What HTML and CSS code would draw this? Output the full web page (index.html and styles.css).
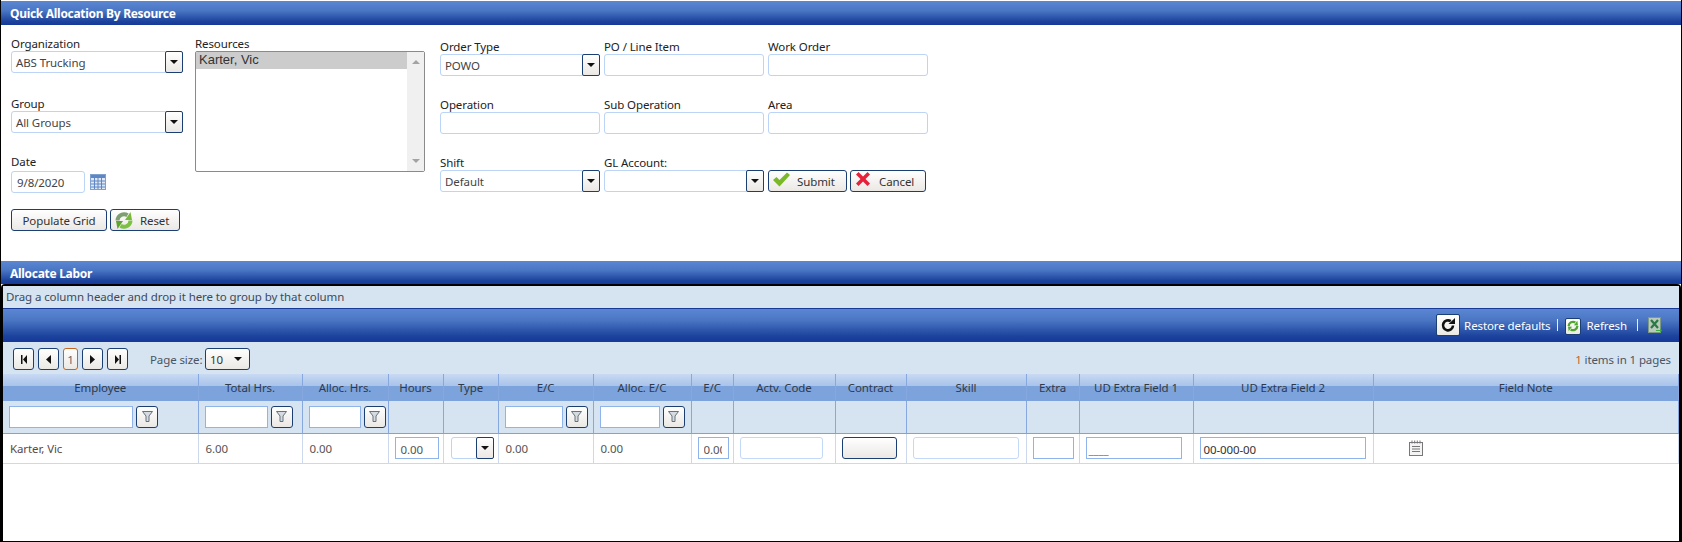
FILE: index.html
```html
<!DOCTYPE html>
<html lang="en">

<head>
	<meta charset="utf-8">
	<title>Quick Allocation By Resource</title>
	<link rel="stylesheet" href="styles.css">
</head>

<body>
	<div id="content">
		<div class="titlebar">Quick Allocation By Resource</div>

		<div id="quickform">
			<div class="col-org">
				<div class="field f-org">
					<label>Organization</label>
					<div class="combo"><span>ABS Trucking</span><i class="combo-btn"><b></b></i></div>
				</div>
				<div class="field f-group">
					<label>Group</label>
					<div class="combo"><span>All Groups</span><i class="combo-btn"><b></b></i></div>
				</div>
				<div class="field f-date">
					<label>Date</label>
					<div class="date-row">
						<div class="input date-input">9/8/2020</div>
						<svg class="cal" width="16" height="16" viewBox="0 0 16 16">
							<rect x="0.5" y="0.5" width="15" height="15" fill="#dfe8f6" stroke="#7f9fcf"/>
							<rect x="1" y="1" width="14" height="3" fill="#5f86c4"/>
							<path d="M1 7h14M1 10h14M1 13h14M4.500 4v11M8 4v11M11.500 4v11" stroke="#5f86c4" fill="none"/>
						</svg>
					</div>
				</div>
				<div class="btn-row">
					<button class="btn b-populate">Populate Grid</button>
					<button class="btn b-reset">
						<svg class="ico" width="18" height="19" viewBox="0 0 18 18">
							<path d="M2.500 9A6.500 6.500 0 0 1 12.500 3.800" fill="none" stroke="#7f9f72" stroke-width="4"/>
							<path d="M10 8.500L17 8.500 15.500 0.500z" fill="#78b83a"/>
							<path d="M15.500 9A6.500 6.500 0 0 1 5.500 14.200" fill="none" stroke="#7cc142" stroke-width="4"/>
							<path d="M8 9.500L1 9.500 2.500 17.500z" fill="#5ea52d"/>
						</svg>
						<span>Reset</span>
					</button>
				</div>
			</div>

			<div class="col-res">
				<label>Resources</label>
				<div class="listbox">
					<div class="list-items"><div class="list-sel">Karter, Vic</div></div>
					<div class="list-scroll"><b class="up"></b><b class="down"></b></div>
				</div>
			</div>

			<div class="col-order">
				<div class="field">
					<label>Order Type</label>
					<div class="combo"><span>POWO</span><i class="combo-btn"><b></b></i></div>
				</div>
				<div class="field">
					<label>PO / Line Item</label>
					<div class="input"></div>
				</div>
				<div class="field">
					<label>Work Order</label>
					<div class="input"></div>
				</div>
				<div class="field">
					<label>Operation</label>
					<div class="input"></div>
				</div>
				<div class="field">
					<label>Sub Operation</label>
					<div class="input"></div>
				</div>
				<div class="field">
					<label>Area</label>
					<div class="input"></div>
				</div>
				<div class="field last-row">
					<label>Shift</label>
					<div class="combo"><span>Default</span><i class="combo-btn"><b></b></i></div>
				</div>
				<div class="field last-row">
					<label>GL Account:</label>
					<div class="combo"><span></span><i class="combo-btn"><b></b></i></div>
				</div>
				<div class="field submit-row">
					<button class="btn b-submit">
						<svg class="ico" width="17" height="15" viewBox="0 0 17 15">
							<path d="M0 8L3.500 5 6.500 8 14 0.500 17 3 6.500 14.500z" fill="#7ab829"/>
						</svg>
						<span>Submit</span>
					</button>
					<button class="btn b-cancel">
						<svg class="ico" width="14" height="14" viewBox="0 0 14 14">
							<path d="M0 2.500L2.500 0 7 4.500 11.500 0 14 2.500 9.500 7 14 11.500 11.500 14 7 9.500 2.500 14 0 11.500 4.500 7z" fill="#e5223a"/>
						</svg>
						<span>Cancel</span>
					</button>
				</div>
			</div>
		</div>

		<div class="titlebar t-labor">Allocate Labor</div>

		<div id="grid">
			<div class="group-panel">Drag a column header and drop it here to group by that column</div>

			<div class="toolbar">
				<button class="tool-btn">
					<svg width="16" height="16" viewBox="0 0 16 16">
						<path d="M13 8.500a5 5 0 1 1-2.200-4.300" fill="none" stroke="#111" stroke-width="2.600"/>
						<path d="M8.500 7h6.500V1z" fill="#111"/>
					</svg>
				</button>
				<a class="tool-link">Restore defaults</a>
				<span class="tool-sep s1"></span>
				<button class="tool-btn small">
					<svg width="12" height="12" viewBox="0 0 18 18">
						<path d="M2.500 9A6.500 6.500 0 0 1 12.500 3.800" fill="none" stroke="#4ea72e" stroke-width="3.500"/>
						<path d="M10.500 8L16.500 8.200 15.500 1z" fill="#4ea72e"/>
						<path d="M15.500 9A6.500 6.500 0 0 1 5.500 14.200" fill="none" stroke="#4ea72e" stroke-width="3.500"/>
						<path d="M7.500 10L1.500 9.800 2.500 17z" fill="#4ea72e"/>
					</svg>
				</button>
				<a class="tool-link l-refresh">Refresh</a>
				<span class="tool-sep s2"></span>
				<svg class="xls" width="14" height="16" viewBox="0 0 14 16">
					<rect x="0.500" y="0.500" width="12" height="15" fill="#b9c9bb" stroke="#7d9a86"/>
					<path d="M3 3l7 8M10 3l-7 8" stroke="#2a7a45" stroke-width="2.200"/>
					<path d="M8 13h4v-2l2 2.500-2 2.500v-2H8z" fill="#3fae3f"/>
				</svg>
			</div>

			<div class="pager">
				<div class="pager-nav">
					<button class="pg-btn"><svg width="8" height="9" viewBox="0 0 8 9"><path d="M1 0h1.500v9H1zM7 0v9L3 4.500z" fill="#111"/></svg></button>
					<button class="pg-btn"><svg width="5" height="9" viewBox="0 0 5 9"><path d="M5 0v9L0 4.500z" fill="#111"/></svg></button>
					<span class="pg-cur">1</span>
					<button class="pg-btn"><svg width="5" height="9" viewBox="0 0 5 9"><path d="M0 0v9l5-4.500z" fill="#111"/></svg></button>
					<button class="pg-btn"><svg width="8" height="9" viewBox="0 0 8 9"><path d="M7 0H5.500v9H7zM1 0v9l4-4.500z" fill="#111"/></svg></button>
				</div>
				<span class="pg-label">Page size:</span>
				<div class="pg-size"><span>10</span><b></b></div>
				<span class="pg-info"><em>1</em> items in 1 pages</span>
			</div>

			<table id="labortable">
				<colgroup>
					<col class="c-emp"><col class="c-tot"><col class="c-alh"><col class="c-hrs"><col class="c-typ">
					<col class="c-ec"><col class="c-aec"><col class="c-ec2"><col class="c-act"><col class="c-con">
					<col class="c-ski"><col class="c-ext"><col class="c-ud1"><col class="c-ud2"><col class="c-not">
				</colgroup>
				<tr class="head">
					<th>Employee</th><th>Total Hrs.</th><th>Alloc. Hrs.</th><th>Hours</th><th>Type</th>
					<th>E/C</th><th>Alloc. E/C</th><th>E/C</th><th>Actv. Code</th><th>Contract</th>
					<th>Skill</th><th>Extra</th><th>UD Extra Field 1</th><th>UD Extra Field 2</th><th>Field Note</th>
				</tr>
				<tr class="filters">
					<td><div class="filter"><div class="finput fi-emp"></div><button class="fbtn"><svg width="11" height="11" viewBox="0 0 11 11"><path d="M0.500 0.500h10L7 5v5.500H4V5z" fill="#d5dbe0" stroke="#66727d"/></svg></button></div></td>
					<td><div class="filter"><div class="finput fi-tot"></div><button class="fbtn"><svg width="11" height="11" viewBox="0 0 11 11"><path d="M0.500 0.500h10L7 5v5.500H4V5z" fill="#d5dbe0" stroke="#66727d"/></svg></button></div></td>
					<td><div class="filter"><div class="finput fi-alh"></div><button class="fbtn"><svg width="11" height="11" viewBox="0 0 11 11"><path d="M0.500 0.500h10L7 5v5.500H4V5z" fill="#d5dbe0" stroke="#66727d"/></svg></button></div></td>
					<td></td><td></td>
					<td><div class="filter"><div class="finput fi-ec"></div><button class="fbtn"><svg width="11" height="11" viewBox="0 0 11 11"><path d="M0.500 0.500h10L7 5v5.500H4V5z" fill="#d5dbe0" stroke="#66727d"/></svg></button></div></td>
					<td><div class="filter"><div class="finput fi-aec"></div><button class="fbtn"><svg width="11" height="11" viewBox="0 0 11 11"><path d="M0.500 0.500h10L7 5v5.500H4V5z" fill="#d5dbe0" stroke="#66727d"/></svg></button></div></td>
					<td></td><td></td><td></td><td></td><td></td><td></td><td></td><td></td>
				</tr>
				<tr class="row">
					<td class="name">Karter, Vic</td>
					<td>6.00</td>
					<td>0.00</td>
					<td class="has-input"><div class="cell-input blue w-hrs">0.00</div></td>
					<td class="has-input"><div class="combo mini"><span></span><i class="combo-btn"><b></b></i></div></td>
					<td>0.00</td>
					<td>0.00</td>
					<td class="has-input"><div class="cell-input blue w-ec"><span class="clip">0.00</span></div></td>
					<td class="has-input"><div class="cell-input pale w-act"></div></td>
					<td class="has-input"><button class="btn contract"></button></td>
					<td class="has-input"><div class="cell-input pale w-ski"></div></td>
					<td class="has-input"><div class="cell-input blue w-ext"></div></td>
					<td class="has-input"><div class="cell-input blue mask w-ud1">____</div></td>
					<td class="has-input"><div class="cell-input blue code w-ud2">00-000-00</div></td>
					<td class="note">
						<svg width="16" height="16" viewBox="0 0 16 16">
							<rect x="1.500" y="2.500" width="13" height="13" fill="#f4f4f4" stroke="#777"/>
							<path d="M4 0.500v3M6.700 0.500v3M9.300 0.500v3M12 0.500v3M4 6.500h8M4 9h8M4 11.500h8" stroke="#777" fill="none"/>
						</svg>
					</td>
				</tr>
			</table>
		</div>
	</div>
</body>

</html>
```

FILE: styles.css
```css
* {
	box-sizing: border-box;
}

html,
body {
	height: 100%;
}

body {
	margin: 0;
	background: #000;
	font-family: "Noto Sans", sans-serif;
	font-size: 11.500px;
	letter-spacing: -0.1px;
	color: #333;
	overflow: hidden;
}

#content {
	height: 541px;
	margin: 0 1px;
	padding-top: 1px;
	background: #fff;
}

label {
	display: block;
	height: 16px;
	line-height: 18px;
	color: #222;
}

button {
	font-family: inherit;
	font-size: inherit;
	letter-spacing: inherit;
	color: #333;
	padding: 0;
	cursor: pointer;
}

/* title bars */
.titlebar {
	height: 24px;
	padding-left: 9px;
	line-height: 25px;
	font-size: 12px;
	font-weight: bold;
	letter-spacing: -0.3px;
	color: #fff;
	background: linear-gradient(#5a86d2, #4a76c4 40%, #1c439c 85%, #17399a);
}

.t-labor {
	height: 23px;
	line-height: 25px;
}

/* top form */
#quickform {
	display: flex;
	height: 236px;
	padding: 10px 0 0 10px;
}

.col-org {
	width: 172px;
}

.field .combo,
.field .input {
	width: 100%;
}

.f-group {
	margin-top: 22px;
}

.f-date {
	margin-top: 22px;
}

.f-date label {
	line-height: 14px;
}

.date-row {
	display: flex;
	align-items: center;
}

.field .date-input {
	width: 74px;
}

.cal {
	margin-left: 5px;
}

.btn-row {
	display: flex;
	gap: 3px;
	margin-top: 16px;
}

.combo {
	display: flex;
	height: 22px;
	background: #fff;
	border: 1px solid #bcd4f5;
	border-radius: 3px;
}

.combo span {
	flex: 1;
	padding-left: 4px;
	line-height: 21px;
	color: #444;
}

.combo-btn {
	display: flex;
	align-items: center;
	justify-content: center;
	width: 18px;
	margin: -1px -1px -1px 0;
	background: linear-gradient(#fff, #ebe8e4);
	border: 1px solid #1b3f73;
	border-radius: 2px;
}

.combo-btn b {
	border-style: solid;
	border-width: 4px 4px 0;
	border-color: #111 transparent transparent;
}

.input {
	height: 22px;
	padding-left: 5px;
	line-height: 21px;
	color: #444;
	background: #fff;
	border: 1px solid #bcd4f5;
	border-radius: 3px;
}

.btn {
	display: flex;
	align-items: center;
	height: 22px;
	background: linear-gradient(#fff, #ebe8e4);
	border: 1px solid #1b3f73;
	border-radius: 3px;
}

.b-populate {
	justify-content: center;
	width: 96px;
}

.b-reset {
	width: 70px;
	padding-left: 4px;
}

.b-reset span {
	margin-left: 7px;
}

.col-res {
	width: 230px;
	margin-left: 12px;
}

.listbox {
	display: flex;
	height: 121px;
	background: #fff;
	border: 1px solid #8a8a8a;
	border-radius: 2px;
}

.list-items {
	flex: 1;
}

.list-sel {
	height: 17px;
	padding-left: 3px;
	line-height: 16px;
	font-family: "Liberation Sans", sans-serif;
	font-size: 13px;
	letter-spacing: 0;
	color: #333;
	background: #ccc;
}

.list-scroll {
	display: flex;
	flex-direction: column;
	justify-content: space-between;
	align-items: center;
	width: 17px;
	padding: 8px 0;
	background: #f0f0f0;
}

.list-scroll b {
	border-style: solid;
	border-color: transparent;
	border-width: 0 4px;
}

.list-scroll .up {
	border-bottom: 4px solid #a3a3a3;
}

.list-scroll .down {
	border-top: 4px solid #a3a3a3;
}

.col-order {
	display: grid;
	grid-template-columns: repeat(3, 160px);
	grid-auto-rows: 58px;
	column-gap: 4px;
	width: 488px;
	margin-left: 15px;
	margin-top: 3px;
}

.submit-row {
	display: flex;
	gap: 3px;
	padding-top: 16px;
}

.b-submit {
	width: 79px;
	padding-left: 4px;
}

.b-submit span {
	margin-left: 7px;
}

.b-cancel {
	width: 76px;
	padding-left: 5px;
}

.b-cancel span {
	margin-left: 9px;
}

.b-submit .ico,
.b-cancel .ico {
	margin-top: -4px;
}

/* grid */
#grid {
	height: 257px;
	background: #fff;
	border: 2px solid #000;
	border-bottom: 0;
	border-radius: 4px 4px 0 0;
}

.group-panel {
	height: 23px;
	padding-left: 3px;
	line-height: 22px;
	color: #3d4a5a;
	background: #d6e3f1;
	border-bottom: 1px solid #17399a;
}

.toolbar {
	display: flex;
	align-items: center;
	justify-content: flex-end;
	height: 33px;
	padding-right: 17px;
	background: linear-gradient(#5a86d2, #4a76c4 35%, #1c439c 85%, #17399a);
	border-bottom: 1px solid #17399a;
}

.tool-btn {
	display: flex;
	align-items: center;
	justify-content: center;
	width: 24px;
	height: 22px;
	background: linear-gradient(#fff, #ebe8e4);
	border: 1px solid #1b3f73;
	border-radius: 2px;
}

.tool-btn.small {
	width: 16px;
	height: 17px;
	margin-top: 2px;
}

.tool-link {
	margin-left: 4px;
	color: #fff;
}

.tool-link.l-refresh {
	margin-left: 5px;
}

.tool-sep {
	width: 1px;
	height: 12px;
	background: #e6eefb;
}

.s1 {
	margin: 0 7px;
}

.s2 {
	margin: 0 10px;
}

.pager {
	display: flex;
	align-items: flex-start;
	height: 32px;
	padding: 6px 8px 0 10px;
	background: #d6e3f1;
}

.pager-nav {
	display: flex;
	gap: 4px;
}

.pg-btn,
.pg-cur {
	display: flex;
	align-items: center;
	justify-content: center;
	width: 21px;
	height: 22px;
	background: linear-gradient(#fff, #ebe8e4);
	border: 1px solid #1b3f73;
	border-radius: 3px;
}

.pg-cur {
	width: 15px;
	color: #666;
	border-color: #c8641e;
}

.pg-label {
	width: 51px;
	margin-left: 22px;
	line-height: 24px;
	white-space: nowrap;
	color: #4a5563;
}

.pg-size {
	display: flex;
	align-items: center;
	justify-content: space-between;
	width: 45px;
	height: 22px;
	margin-left: 4px;
	padding: 0 7px 0 4px;
	background: linear-gradient(#fff, #ebe8e4);
	border: 1px solid #1b3f73;
	border-radius: 3px;
}

.pg-size b {
	border-style: solid;
	border-width: 4px 4px 0;
	border-color: #111 transparent transparent;
}

.pg-info {
	margin-left: auto;
	line-height: 24px;
	color: #4a5563;
}

.pg-info em {
	font-style: normal;
	color: #c8641e;
}

#labortable {
	width: 100%;
	table-layout: fixed;
	border-collapse: collapse;
}

.c-emp { width: 195px; }
.c-tot { width: 104px; }
.c-alh { width: 86px; }
.c-hrs { width: 55px; }
.c-typ { width: 55px; }
.c-ec { width: 95px; }
.c-aec { width: 98px; }
.c-ec2 { width: 42px; }
.c-act { width: 102px; }
.c-con { width: 71px; }
.c-ski { width: 120px; }
.c-ext { width: 53px; }
.c-ud1 { width: 114px; }
.c-ud2 { width: 180px; }

.head th {
	height: 26px;
	padding: 2px 0 0;
	font-weight: normal;
	color: #2f3a4a;
	background: linear-gradient(#c8d9f3, #a9c3ea 45%, #7da3dc 48%, #7da3dc);
	border-right: 1px solid #87a8de;
	border-bottom: 1px solid #7da3dc;
}

.filters td {
	height: 33px;
	padding: 0;
	background: #d6e3f1;
	border-right: 1px solid #87a8de;
	border-bottom: 1px solid #7da3dc;
}

.filter {
	display: flex;
	gap: 3px;
	padding-left: 6px;
}

.finput {
	height: 22px;
	background: #fff;
	border: 1px solid #8fb4ec;
}

.fi-emp { width: 124px; }
.fi-tot { width: 63px; }
.fi-alh { width: 52px; }
.fi-ec { width: 58px; }
.fi-aec { width: 60px; }

.fbtn {
	display: flex;
	align-items: center;
	justify-content: center;
	width: 22px;
	height: 22px;
	background: linear-gradient(#fff, #ebe8e4);
	border: 1px solid #1b3f73;
	border-radius: 3px;
}

.row td {
	height: 30px;
	padding: 0 0 0 7px;
	color: #555;
	background: #fff;
	border-right: 1px solid #ccd9ec;
	border-bottom: 1px solid #ccd9ec;
}

.row td.name {
	padding-left: 7px;
	color: #5a4a46;
}

.row td.has-input {
	padding-left: 6px;
}

.cell-input {
	height: 22px;
	padding-left: 5px;
	line-height: 23px;
	background: #fff;
	overflow: hidden;
	white-space: nowrap;
}

.cell-input.blue {
	border: 1px solid #8fb4ec;
}

.cell-input.pale {
	border: 1px solid #c4d9f7;
	border-radius: 3px;
}

.w-hrs { width: 44px; }
.w-ec { width: 31px; }
.w-act { width: 83px; }
.w-ski { width: 106px; }
.w-ext { width: 41px; }
.w-ud1 { width: 96px; }
.w-ud2 { width: 166px; }

.clip {
	display: block;
	width: 18px;
	overflow: hidden;
}

.cell-input.code {
	padding-left: 3px;
	color: #333;
}

.cell-input.mask {
	padding-left: 2px;
	color: #777;
}

.combo.mini {
	width: 43px;
	margin-left: 1px;
}

.contract {
	width: 55px;
}

.row td.note {
	padding-left: 34px;
}

.note svg {
	display: block;
}
```
